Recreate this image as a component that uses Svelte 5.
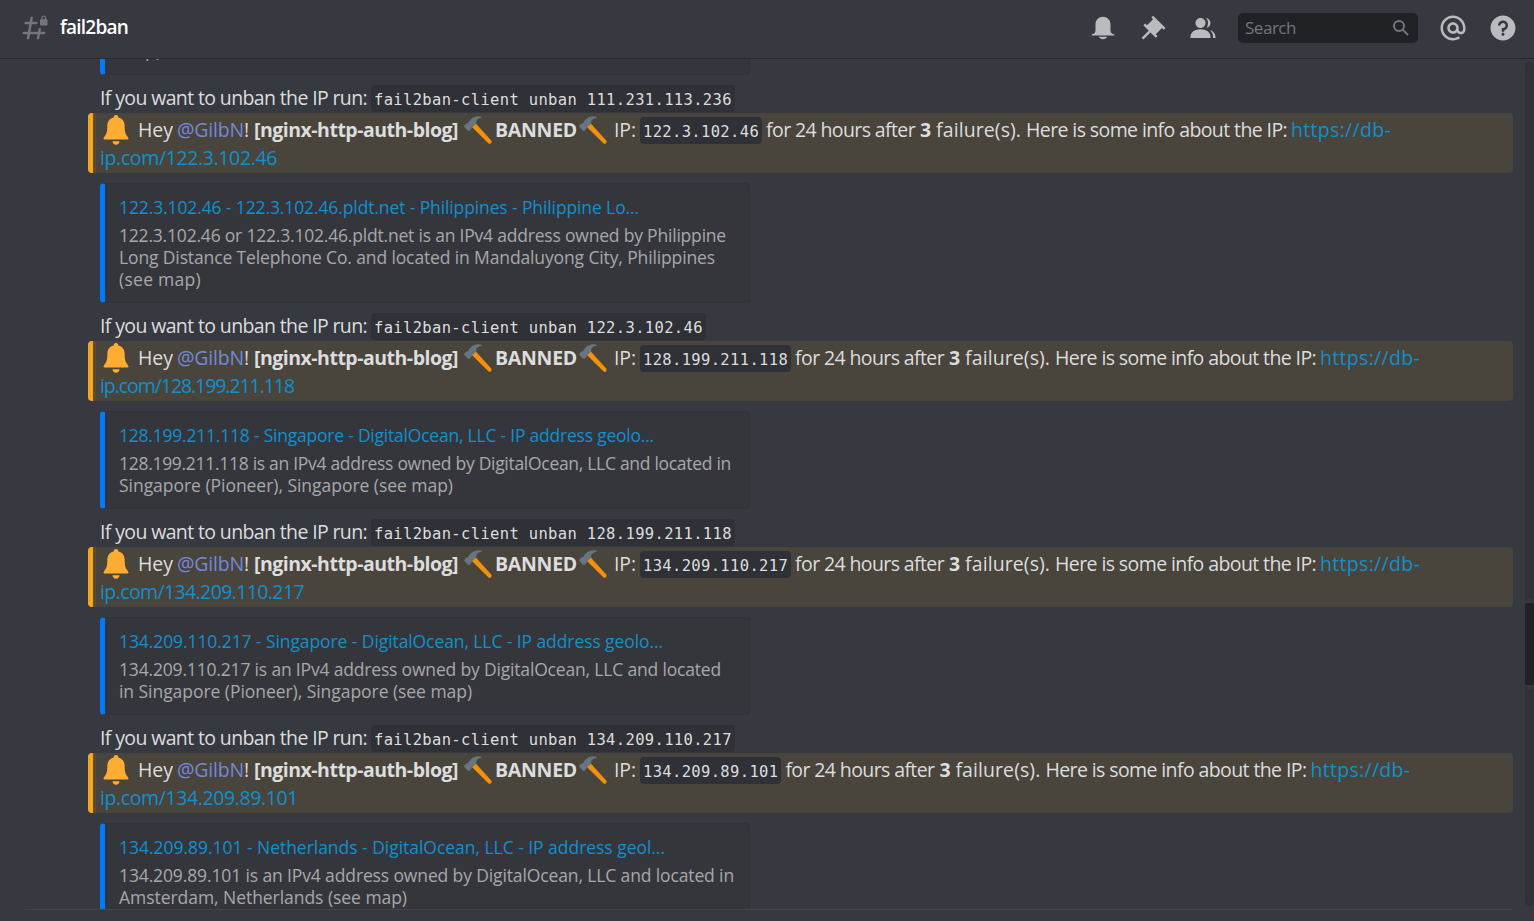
<script>
  const bans = [
    {
      ip: '122.3.102.46',
      title: '122.3.102.46 - 122.3.102.46.pldt.net - Philippines - Philippine Lo...', titleWidth: 520,
      linkWidth: 177, lines: [
        ['122.3.102.46 or 122.3.102.46.pldt.net is an IPv4 address owned by Philippine', 607],
        ['Long Distance Telephone Co. and located in Mandaluyong City, Philippines', 596],
        ['(see map)', 82]
      ]
    },
    {
      ip: '128.199.211.118',
      title: '128.199.211.118 - Singapore - DigitalOcean, LLC - IP address geolo...', titleWidth: 535,
      linkWidth: 194, lines: [
        ['128.199.211.118 is an IPv4 address owned by DigitalOcean, LLC and located in', 612],
        ['Singapore (Pioneer), Singapore (see map)', 334]
      ]
    },
    {
      ip: '134.209.110.217',
      title: '134.209.110.217 - Singapore - DigitalOcean, LLC - IP address geolo...', titleWidth: 544,
      linkWidth: 204, lines: [
        ['134.209.110.217 is an IPv4 address owned by DigitalOcean, LLC and located', 602],
        ['in Singapore (Pioneer), Singapore (see map)', 353]
      ]
    },
    {
      ip: '134.209.89.101',
      title: '134.209.89.101 - Netherlands - DigitalOcean, LLC - IP address geol...', titleWidth: 546,
      linkWidth: 198, lines: [
        ['134.209.89.101 is an IPv4 address owned by DigitalOcean, LLC and located in', 615],
        ['Amsterdam, Netherlands (see map)', 288]
      ]
    }
  ];

  // Spreads a run of text over the given width by adjusting its tracking.
  function fit(node, width) {
    const natural = node.getBoundingClientRect().width;
    const n = node.textContent.length;
    node.style.letterSpacing = `${(width - natural) / n}px`;
  }
</script>

{#snippet hammer()}
  <svg class="emoji" viewBox="0 0 36 36">
    <path fill="#F4900C" d="M35 31.5 15.2 9.6l-5 4.7L31.3 35c1 .9 2.500 .9 3.400 0 .9-.9 1.200-2.500 .3-3.500z" />
    <path fill="#66757F" d="M22.600 1.100C18.500-.6 13.300 .2 9.500 3.600L6.800 6.300c-1 1-.8 2.100-1.500 2.800-.8 .7-2 .2-3 1.200L.8 11.800c-.8 .8-.8 2 0 2.800l3.900 3.900c.8 .8 2 .8 2.800 0l1.600-1.500c.9-.9 .5-2.100 1.200-2.900 .7-.7 1.300-.5 2-1.200l2.900-2.900c.9-.9 .5-1.500 .5-2.500 0-2.500 3.500-5 6.700-5.300.8 0 .9-.8 .2-1.100z" />
  </svg>
{/snippet}

{#snippet unban(ip)}
  <div class="unban">
    <span use:fit={267}>If you want to unban the IP run:</span>
    <code>fail2ban-client unban {ip}</code>
  </div>
{/snippet}

<div class="chat">
  <header>
    <svg class="icon hash" viewBox="0 0 24 24">
      <path d="M14 8C14 7.448 13.552 7 13 7H9.760L10.366 3.587C10.420 3.281 10.185 3 9.873 3H8.889C8.647 3 8.439 3.174 8.397 3.413L7.760 7H4.180C3.937 7 3.729 7.175 3.688 7.414L3.513 8.414C3.459 8.720 3.694 9 4.005 9H7.410L6.350 15H2.770C2.527 15 2.319 15.175 2.278 15.414L2.103 16.414C2.049 16.720 2.284 17 2.595 17H6L5.394 20.413C5.340 20.719 5.575 21 5.887 21H6.871C7.113 21 7.321 20.826 7.363 20.587L8 17H14L13.394 20.413C13.340 20.719 13.575 21 13.887 21H14.871C15.113 21 15.321 20.826 15.363 20.587L16 17H19.580C19.823 17 20.031 16.825 20.072 16.586L20.247 15.586C20.301 15.280 20.065 15 19.755 15H16.350L16.676 13.156C16.782 12.553 16.319 12 15.706 12C15.229 12 14.820 12.343 14.737 12.813L14.350 15H8.350L9.410 9H13C13.552 9 14 8.552 14 8Z" />
      <path fill-rule="evenodd" d="M21 5V4C21 2.880 20.050 2 19 2C17.950 2 17 2.880 17 4V5C16.448 5 16 5.448 16 6V9C16 9.552 16.448 10 17 10H21C21.552 10 22 9.552 22 9V6C22 5.448 21.552 5 21 5ZM20 5H18V4C18 3.429 18.467 3 19 3C19.533 3 20 3.429 20 4V5Z" />
    </svg>
    <h1><span use:fit={68}>fail2ban</span></h1>
    <div class="tools">
      <svg class="icon" viewBox="0 0 24 24"><path d="M18 9V14C18 15.657 19.344 17 21 17V18H3V17C4.656 17 6 15.657 6 14V9C6 5.686 8.686 3 12 3C15.314 3 18 5.686 18 9ZM12 21C10.524 21 9.248 20.190 8.555 19H15.445C14.752 20.190 13.476 21 12 21Z" /></svg>
      <svg class="icon" viewBox="0 0 24 24"><path d="M22 12L12.101 2.101L10.686 3.514L12.101 4.929L7.151 9.878V9.880L5.736 8.465L4.322 9.880L8.565 14.122L2.908 19.778L4.322 21.192L9.979 15.536L14.222 19.778L15.636 18.364L14.222 16.950L19.171 12H19.172L20.586 13.414L22 12Z" /></svg>
      <svg class="icon" viewBox="0 0 24 24"><path d="M14 8.006C14 10.211 12.206 12.006 10 12.006C7.795 12.006 6 10.211 6 8.006C6 5.801 7.794 4.006 10 4.006C12.206 4.006 14 5.801 14 8.006ZM2 19.006C2 15.473 5.290 13.006 10 13.006C14.711 13.006 18 15.473 18 19.006V20.006H2V19.006ZM20 20.006H22V19.006C22 16.443 20.270 14.441 17.521 13.535C19.062 14.913 20 16.806 20 19.006V20.006ZM14.883 11.908C16.666 11.504 18 9.908 18 8.006C18 5.969 16.469 4.282 14.497 4.036C15.432 5.099 16 6.493 16 8.006C16 9.461 15.582 10.806 14.883 11.908Z" /></svg>
      <div class="search">
        <span use:fit={51}>Search</span>
        <svg viewBox="0 0 18 18"><circle cx="7" cy="7" r="5" /><path d="m10.600 10.600 5.400 5.400" /></svg>
      </div>
      <svg class="icon" viewBox="0 0 24 24"><path d="M12 2C6.486 2 2 6.486 2 12C2 17.515 6.486 22 12 22C14.039 22 15.993 21.398 17.652 20.259L16.521 18.611C15.195 19.519 13.633 20 12 20C7.589 20 4 16.411 4 12C4 7.589 7.589 4 12 4C16.411 4 20 7.589 20 12V12.782C20 14.170 19.402 15 18.400 15L18.398 15.018C18.338 15.005 18.273 15 18.209 15H18C17.437 15 16.600 14.182 16.600 13.631V12C16.600 9.464 14.537 7.400 12 7.400C9.463 7.400 7.400 9.463 7.400 12C7.400 14.537 9.463 16.600 12 16.600C13.234 16.600 14.350 16.106 15.177 15.313C15.826 16.269 16.930 17 18 17L18.002 16.981C18.064 16.994 18.129 17 18.195 17H18.400C20.552 17 22 15.306 22 12.782V12C22 6.486 17.514 2 12 2ZM12 14.599C10.566 14.599 9.400 13.433 9.400 11.999C9.400 10.565 10.566 9.399 12 9.399C13.434 9.399 14.600 10.565 14.600 11.999C14.600 13.433 13.434 14.599 12 14.599Z" /></svg>
      <svg class="icon" viewBox="0 0 24 24"><path d="M12 2C6.486 2 2 6.487 2 12C2 17.515 6.486 22 12 22C17.514 22 22 17.515 22 12C22 6.487 17.514 2 12 2ZM12 18.250C11.310 18.250 10.750 17.691 10.750 17C10.750 16.310 11.310 15.750 12 15.750C12.690 15.750 13.250 16.310 13.250 17C13.250 17.691 12.690 18.250 12 18.250ZM13 13.875V15H11V12H12C13.104 12 14 11.103 14 10C14 8.896 13.104 8 12 8C10.896 8 10 8.896 10 10H8C8 7.795 9.795 6 12 6C14.205 6 16 7.795 16 10C16 11.861 14.723 13.429 13 13.875Z" /></svg>
    </div>
  </header>

  <main>
    <div class="messages">
      <div class="embed first"><p>map)</p></div>
      {@render unban('111.231.113.236')}
      {#each bans as ban, i}
        <div class="mention">
          <div class="line">
            <svg class="emoji bell" viewBox="0 0 36 36">
              <path fill="#FFAC33" d="M18 0c-2 0-2.700 1.600-2.900 3C9.800 4.200 7.600 8.600 7.600 13c0 8-1.200 10.200-3.500 13C3.200 27.200 3 27.700 3 28.200c0 .9.600 1.300 1.600 1.300h26.800c1 0 1.600-.4 1.600-1.300 0-.5-.2-1-1.100-2.200-2.300-2.800-3.500-5-3.500-13 0-4.400-2.200-8.800-7.500-10C20.700 1.600 20 0 18 0zM13.700 31.500h8.600c-.3 2.500-2 4.300-4.300 4.300s-4-1.800-4.300-4.300z" />
            </svg>
            <span class="hey" use:fit={35}>Hey</span><span class="user" use:fit={67}>@GilbN</span><span class="bang">!</span><b use:fit={204}>[nginx-http-auth-blog]</b>
            <i class="h1">{@render hammer()}</i><b class="banned" use:fit={82}>BANNED</b><i class="h2">{@render hammer()}</i>
            <span class="ip" use:fit={22}>IP:</span><code>{ban.ip}</code><span use:fit={149}>for 24 hours after</span><b class="count" use:fit={12}>3</b><span class="failures" use:fit={85}>failure(s).</span><span class="info" use:fit={261}>Here is some info about the IP:</span><span class="link" use:fit={100}>https://db-</span>
          </div>
          <div class="line"><span class="link" use:fit={ban.linkWidth}>ip.com/{ban.ip}</span></div>
        </div>
        <div class="embed">
          <h2><span use:fit={ban.titleWidth}>{ban.title}</span></h2>
          {#each ban.lines as [text, width]}
            <p><span use:fit={width}>{text}</span></p>
          {/each}
        </div>
        {#if i < 3}{@render unban(ban.ip)}{/if}
      {/each}
    </div>
    <div class="track"><div class="thumb"></div></div>
  </main>
  <footer></footer>
</div>

<style>
  :global(body) { margin: 0; overflow: hidden; }
  .chat {
    width: 1534px; height: 921px; box-sizing: border-box; overflow: hidden;
    display: flex; flex-direction: column;
    background: #36393f; color: #dcddde;
    font: 19.5px/28px "Open Sans", "Noto Sans", sans-serif;
  }
  header {
    flex: none; height: 59px; box-sizing: border-box; padding: 0 16px 3px 20px;
    display: flex; align-items: center;
    border-bottom: 1px solid #292b2f;
  }
  span, b { white-space: pre; }
  .icon { width: 30px; height: 30px; fill: #b9bbbe; flex: none; display: block; }
  .hash { fill: #72767d; }
  h1 { margin: -1px 0 0 10px; font-size: 19px; font-weight: 600; color: #fff; line-height: 28px; }
  .tools { margin-left: auto; display: flex; align-items: center; gap: 20px; }
  .search {
    width: 180px; height: 30px; box-sizing: border-box; padding: 0 8px 0 7px;
    display: flex; align-items: center; justify-content: space-between;
    border-radius: 5px; background: #202225; color: #72767d; font-size: 17px;
  }
  .search svg { width: 18px; height: 18px; fill: none; stroke: #72767d; stroke-width: 2; }
  main { flex: none; height: 850px; display: flex; overflow: hidden; }
  .messages { width: 1525px; padding-left: 88px; box-sizing: border-box; margin-top: -82px; }
  .mention {
    width: 1425px; height: 60px; box-sizing: border-box; padding: 3px 0 0 4px;
    border-left: 5px solid #faa61a; border-radius: 4px;
    background: #49443c; box-shadow: inset 3px 0 #584b38;
  }
  .line { display: flex; align-items: center; height: 28px; padding-left: 3px; }
  .emoji { width: 28px; height: 28px; display: block; flex: none; }
  .bell { width: 30px; height: 30px; margin-left: 1px; }
  .hey { margin-left: 7px; }
  .user { color: #7289da; margin-left: 4px; }
  .bang { width: 10px; }
  .h1 { margin-left: 6px; }
  .banned { margin-left: 3px; }
  .h2 { margin-left: 2px; }
  .ip { margin-left: 7px; }
  b { font-weight: 700; }
  code {
    height: 27px; box-sizing: border-box; padding: 1px 3px 0; border-radius: 4px; flex: none;
    background: #2f3136; font: 15.500px/28px "DejaVu Sans Mono", monospace; letter-spacing: .34px;
    white-space: pre;
  }
  .line code { margin: 0 4px; }
  .count { margin-left: 5px; }
  .failures { margin-left: 4px; }
  .info { margin: 0 4px 0 5px; }
  .link { color: #0f90cf; }
  .embed {
    width: 650px; box-sizing: border-box; margin: 10px 0 0 12px; padding: 9px 14px 12px 14px;
    border: 1px solid #323338; border-left: 5px solid #007bff; border-radius: 4px;
    background: #35363b; font-size: 17.5px;
  }
  .embed.first { height: 98px; margin-top: 0; padding-top: 61px; padding-bottom: 0; }
  h2 { margin: 0 0 3px; font-size: 17.5px; line-height: 28px; font-weight: 500; color: #0f90cf; }
  p { margin: 0; line-height: 22px; color: #a7a8aa; }
  .unban { height: 38px; box-sizing: border-box; padding: 9px 0 1px 12px; display: flex; align-items: center; }
  .unban code { margin-left: 4px; }
  .track { width: 9px; height: 844px; margin-top: 3px; box-sizing: border-box; padding-top: 537px; background: #313237; border-radius: 5px; }
  .thumb { width: 9px; height: 82px; border: solid #36393f; border-width: 4px 0; border-radius: 5px; background: #202225; background-clip: padding-box; }
  footer { height: 12px; margin: 0 12px 0 25px; border-top: 1px solid #42454b; width: 1488px; }
</style>
